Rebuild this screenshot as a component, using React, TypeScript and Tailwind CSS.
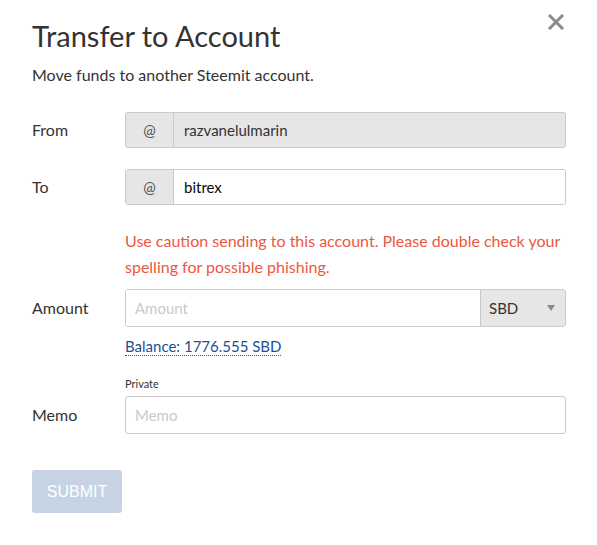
import React from 'react'

const font = { fontFamily: 'Lato, "Noto Sans", sans-serif' }

function Row({ label, children }: { label: string; children: React.ReactNode }) {
  return (
    <div className="flex items-center">
      <div className="w-[93px] shrink-0 text-[16px] text-[#333]">{label}</div>
      <div className="flex-1">{children}</div>
    </div>
  )
}

export default function App() {
  return (
    <div className="relative w-[597px] h-[545px] bg-white pl-[32px] pr-[31px] pt-[16px]" style={font}>
      <button className="absolute right-[33px] top-[14px] text-[#8a8a8a]">
        <svg width="16" height="16" viewBox="0 0 16 16">
          <path d="M2 2 L14 14 M14 2 L2 14" stroke="currentColor" strokeWidth="3" strokeLinecap="square" />
        </svg>
      </button>

      <h1 className="text-[29px] leading-[40px] text-[#333] font-normal">Transfer to Account</h1>
      <p className="mt-[10px] text-[16px] leading-[18px] text-[#333]">Move funds to another Steemit account.</p>

      <div className="mt-[28px]">
        <Row label="From">
          <div className="flex h-[36px] rounded-[3px] border border-[#cacaca] bg-[#e6e6e6] overflow-hidden">
            <div className="w-[48px] flex items-center justify-center border-r border-[#cacaca] text-[15px] text-[#555]">@</div>
            <div className="flex-1 flex items-center pl-[10px] text-[15px] text-[#333]">razvanelulmarin</div>
          </div>
        </Row>
      </div>

      <div className="mt-[21px]">
        <Row label="To">
          <div className="flex h-[36px] rounded-[3px] border border-[#cacaca] overflow-hidden">
            <div className="w-[48px] flex items-center justify-center border-r border-[#cacaca] bg-[#e6e6e6] text-[15px] text-[#555]">@</div>
            <div className="flex-1 flex items-center pl-[10px] bg-white text-[15px] text-[#0a0a0a]">bitrex</div>
          </div>
        </Row>
      </div>

      <div className="ml-[93px] mt-[23px] text-[16px] leading-[26px] text-[#ec5840]">
        Use caution sending to this account. Please double check your spelling for possible phishing.
      </div>

      <div className="mt-[9px]">
        <Row label="Amount">
          <div className="flex h-[38px] rounded-[3px] border border-[#cacaca] overflow-hidden">
            <div className="flex-1 flex items-center pl-[9px] text-[15px] text-[#cacaca] bg-white">Amount</div>
            <div className="w-[85px] flex items-center justify-between pl-[8px] pr-[10px] border-l border-[#cacaca] bg-[#e6e6e6] text-[15px] text-[#333]">
              <span>SBD</span>
              <svg width="8" height="6" viewBox="0 0 8 6">
                <path d="M0 0 L8 0 L4 6 Z" fill="#8a8a8a" />
              </svg>
            </div>
          </div>
        </Row>
      </div>

      <div className="ml-[93px] mt-[7px]">
        <span className="text-[15px] leading-[20px] text-[#1a5099] border-b border-dotted border-[#555]">Balance: 1776.555 SBD</span>
      </div>

      <div className="ml-[93px] mt-[19px] text-[11px] leading-[14px] text-[#333]">Private</div>

      <div className="mt-[5px]">
        <Row label="Memo">
          <div className="flex h-[38px] rounded-[3px] border border-[#cacaca] bg-white items-center pl-[9px] text-[15px] text-[#cacaca]">
            Memo
          </div>
        </Row>
      </div>

      <button
        className="mt-[36px] w-[90px] h-[43px] rounded-[3px] bg-[#c6d3e5] text-white text-[16px] uppercase"
        style={{ fontFamily: '"Liberation Sans", Arial, sans-serif' }}
      >
        Submit
      </button>
    </div>
  )
}
